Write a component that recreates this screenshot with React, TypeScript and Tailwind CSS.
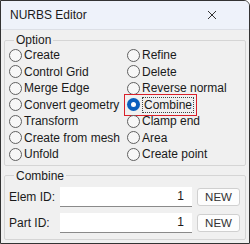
import { useState } from "react"

const leftOptions = ["Create", "Control Grid", "Merge Edge", "Convert geometry", "Transform", "Create from mesh", "Unfold"]
const rightOptions = ["Refine", "Delete", "Reverse normal", "Combine", "Clamp end", "Area", "Create point"]

const Radio = ({ label, checked, onSelect }: { label: string, checked: boolean, onSelect: () => void }) => {
    return (
        <div className="flex items-center h-[16.5px] cursor-pointer whitespace-nowrap" onClick={onSelect}>
            <span className={`relative ${checked ? "outline outline-[1.5px] outline-[#d9202a] outline-offset-[2px]" : ""} flex items-center`}>
                {checked ? (
                    <span className="w-[13px] h-[13px] rounded-full bg-[#0a5fbd] flex items-center justify-center">
                        <span className="w-[5px] h-[5px] rounded-full bg-white"></span>
                    </span>
                ) : (
                    <span className="w-[13px] h-[13px] rounded-full border border-[#606060] bg-[#f7f7f7]"></span>
                )}
                <span className={`ml-[2px] leading-[14px] ${checked ? "border border-dotted border-[#444] px-[1px]" : ""}`}>{label}</span>
            </span>
        </div>
    )
}

const IdRow = ({ label }: { label: string }) => (
    <div className="flex items-center h-[20px]">
        <span className="w-[51px] whitespace-nowrap">{label}</span>
        <div className="w-[132px] h-[20px] bg-white border-b border-[#8a8a8a] flex items-center justify-end pr-[8px]">1</div>
        <button className="ml-[5px] w-[43px] h-[18px] bg-[#fdfdfd] border border-[#d0d0d0] rounded-[3px] text-[11.5px] text-[#333]">NEW</button>
    </div>
)

export default function App() {
    const [selected, setSelected] = useState("Combine")

    return (
        <div className="w-[250px] h-[244px] border border-[#333] rounded-tr-[6px] bg-[#f0f0f0] text-[12px] text-[#1a1a1a] flex flex-col overflow-hidden" style={{ fontFamily: "'Liberation Sans', Arial, sans-serif" }}>
            <div className="h-[29px] bg-[#eef2fa] border-b border-[#dcdfe6] flex items-center justify-between pl-[9px] pr-[12px] shrink-0">
                <span className="text-[12px]">NURBS Editor</span>
                <svg width="10" height="10" viewBox="0 0 10 10" className="mr-[20px]">
                    <path d="M1 1 L9 9 M9 1 L1 9" stroke="#333" strokeWidth="1" />
                </svg>
            </div>

            <div className="px-[3px] pt-[1px]">
                <fieldset className="border border-[#d5d5d5] px-[4px] pb-[2px] rounded-[2px]">
                    <legend className="px-[2px] ml-[5px] text-[#1a1a1a]">Option</legend>
                    <div className="grid grid-cols-2 -mt-[2px]">
                        <div className="flex flex-col">
                            {leftOptions.map(o => <Radio key={o} label={o} checked={selected === o} onSelect={() => setSelected(o)} />)}
                        </div>
                        <div className="flex flex-col pl-[2px]">
                            {rightOptions.map(o => <Radio key={o} label={o} checked={selected === o} onSelect={() => setSelected(o)} />)}
                        </div>
                    </div>
                </fieldset>

                <fieldset className="border border-[#d5d5d5] px-[4px] pt-[2px] pb-[6px] mt-[1px] rounded-[2px] flex flex-col gap-[6px]">
                    <legend className="px-[2px] ml-[5px]">Combine</legend>
                    <IdRow label="Elem ID:" />
                    <IdRow label="Part ID:" />
                </fieldset>
            </div>
        </div>
    )
}
